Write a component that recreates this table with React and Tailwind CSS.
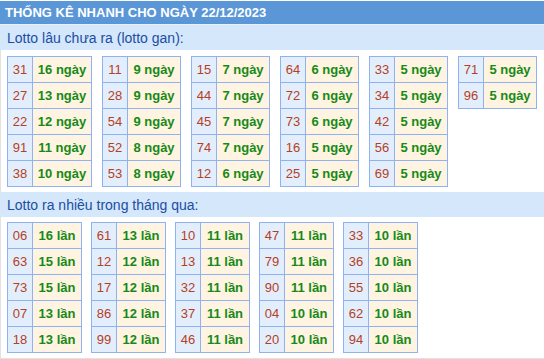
import React from 'react';

const gan = [
  [['31', '16'], ['27', '13'], ['22', '12'], ['91', '11'], ['38', '10']],
  [['11', '9'], ['28', '9'], ['54', '9'], ['52', '8'], ['53', '8']],
  [['15', '7'], ['44', '7'], ['45', '7'], ['74', '7'], ['12', '6']],
  [['64', '6'], ['72', '6'], ['73', '6'], ['16', '5'], ['25', '5']],
  [['33', '5'], ['34', '5'], ['42', '5'], ['56', '5'], ['69', '5']],
  [['71', '5'], ['96', '5']],
];

const nhieu = [
  [['06', '16'], ['63', '15'], ['73', '15'], ['07', '13'], ['18', '13']],
  [['61', '13'], ['12', '12'], ['17', '12'], ['86', '12'], ['99', '12']],
  [['10', '11'], ['13', '11'], ['32', '11'], ['37', '11'], ['46', '11']],
  [['47', '11'], ['79', '11'], ['90', '11'], ['04', '10'], ['20', '10']],
  [['33', '10'], ['36', '10'], ['55', '10'], ['62', '10'], ['94', '10']],
];

// valCls carries the full width class of the count column
const StatTable = ({ rows, unit, valCls }) => (
  <div className="flex flex-col border-l border-t border-[#8fb2f2]">
    {rows.map(([num, count]) => (
      <div key={num} className="flex h-[26px]">
        <div className="w-[25px] flex items-center justify-center border-r border-b border-[#8fb2f2] bg-[#e3eefd] text-[#b5401e]">
          {num}
        </div>
        <div className={`${valCls} flex items-center justify-center border-r border-b border-[#8fb2f2] bg-[#fff3e2] font-bold text-[#168a16] whitespace-nowrap`}>
          {count} {unit}
        </div>
      </div>
    ))}
  </div>
);

export default function App() {
  return (
    <div className="w-[544px] h-[359px] bg-white text-[13px] leading-none font-['Liberation_Sans',Arial,sans-serif] pt-[1px] overflow-hidden">
      {/* title bar */}
      <div className="h-[24px] bg-[#5b97d6] pl-[5px] flex items-center text-white font-bold border-b border-[#e9f2fc]">
        THỐNG KÊ NHANH CHO NGÀY 22/12/2023
      </div>

      <div className="h-[25px] bg-[#d4e7fb] pl-[7px] flex items-center text-[14px] text-[#1b4ea3]">
        Lotto lâu chưa ra (lotto gan):
      </div>
      <div className="border-l border-[#e2e2e2] pl-[6px] pt-[6px] pb-[5px] flex gap-[10px] items-start">
        {gan.map((rows, i) => (
          <StatTable key={i} rows={rows} unit="ngày" valCls={i === 0 ? 'w-[59px]' : 'w-[53px]'} />
        ))}
      </div>

      <div className="h-[25px] bg-[#d4e7fb] pl-[7px] flex items-center text-[14px] text-[#1b4ea3]">
        Lotto ra nhiều trong tháng qua:
      </div>
      <div className="border-l border-b border-[#e2e2e2] pl-[6px] pt-[5px] pb-[5px] flex gap-[9px] items-start">
        {nhieu.map((rows, i) => (
          <StatTable key={i} rows={rows} unit="lần" valCls="w-[49px]" />
        ))}
      </div>
    </div>
  );
}
